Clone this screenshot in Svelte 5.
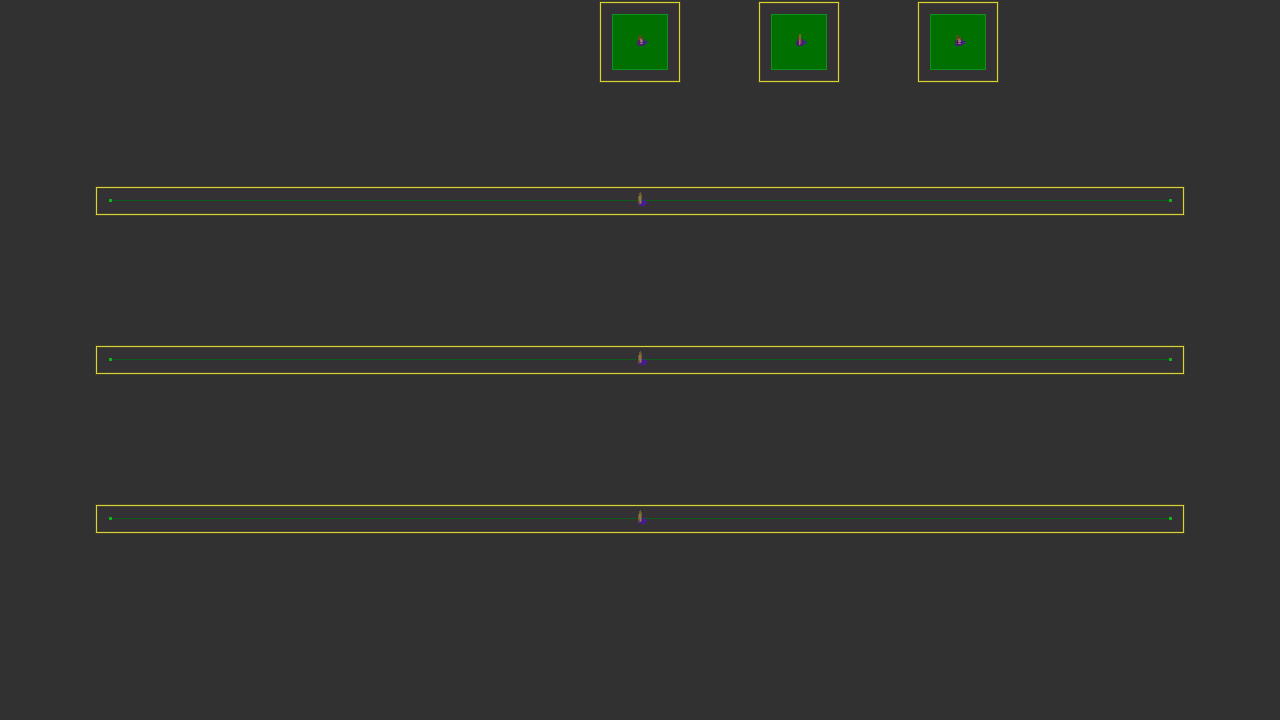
<script>
  const squares = ['ring', 'stem', 'ring'];
  const bars = [1, 2, 3];
</script>

{#snippet marker(kind)}
  <svg class="marker" viewBox="0 0 24 24" aria-hidden="true">
    {#if kind === 'bar'}
      <path d="M11 13h3v-1h2v-1h1v2h2v3h-1v1h-2v1h-5v-1h-1v-3h1z" fill="#4a1a8c" />
      <path d="M14 12h2v1h-2zM17 14h2v1h-2zM14 17h3v1h-3z" fill="#44209a" />
      <path d="M12 4h1v2h1v9h-1v1h-2v-1h-1V8h1V5h1z" fill="#6c5b31" />
      <path d="M11 8h2v5h-2z" fill="#83744c" />
      <path d="M12 12h1v4h-1z" fill="#84727a" />
      <path d="M10 14h1v3h-1z" fill="#54425c" />
    {:else}
      <path d="M8 9h6v1h1v5h-1v1H8v-1H7v-4h1z" fill="#48206c" />
      <path d="M14 10h1v1h3v2h-1v1h-3z" fill="#3d267c" />
      <path d="M16 12h3v1h-3z" fill="#2b495c" />
      {#if kind === 'stem'}
        <path d="M10 4h2v10h-2z" fill="#84602e" />
        <path d="M9 7h1v4H9z" fill="#673c27" />
        <path d="M10 10h1v5h-1z" fill="#927060" />
        <path d="M12 9h1v6h-1z" fill="#572580" />
      {:else}
        <path d="M8 5h1v3h1V5h1v3h1V7h1v3H8z" fill="#744421" />
        <path d="M10 9h2v1h1v2h-1v1h1v1h-3v-1h1v-1h-1z" fill="#8a736c" />
        <path d="M8 10h1v4H8z" fill="#692543" />
        <path d="M13 12h1v3h-1z" fill="#431688" />
      {/if}
    {/if}
  </svg>
{/snippet}

<main>
  <section class="squares">
    {#each squares as kind}
      <div class="frame square">
        <div class="fill">{@render marker(kind)}</div>
      </div>
    {/each}
  </section>
  <section class="bars">
    {#each bars as bar (bar)}
      <div class="frame bar">
        <i class="dot"></i>
        <i class="line"></i>
        {@render marker('bar')}
        <i class="line"></i>
        <i class="dot"></i>
      </div>
    {/each}
  </section>
</main>

<style>
  :global(body) {
    margin: 0;
    background: #313131;
  }
  main {
    min-height: 100vh;
    box-sizing: border-box;
    padding-top: 2px;
    overflow: hidden;
    background: #313131;
  }
  .frame {
    box-sizing: border-box;
    border: 1px solid #d8d03c;
    outline: 1px solid #5a572088;
    box-shadow: inset 0 0 0 1px #5a572077;
    background: #333133;
  }
  .squares {
    display: flex;
    gap: 79px;
    margin-left: calc(50% - 40px);
  }
  .square {
    flex: none;
    width: 80px;
    height: 80px;
    padding: 11px;
  }
  .fill {
    display: grid;
    place-items: center;
    box-sizing: border-box;
    height: 56px;
    padding-left: 4px;
    border: 1px solid #10901a;
    background: #007000;
  }
  .marker {
    display: block;
    flex: none;
    width: 24px;
    height: 24px;
    shape-rendering: crispEdges;
  }
  .bars {
    display: grid;
    gap: 131px;
    margin: 105px 7.5% 0;
  }
  .bar {
    display: flex;
    align-items: center;
    height: 28px;
    padding: 0 11px 1px 12px;
  }
  .line {
    flex: 1;
    height: 1px;
    background: #0e5a18;
  }
  .bar .marker {
    align-self: flex-start;
    margin: 0 -8px 0 -9px;
  }
  .dot {
    flex: none;
    width: 3px;
    height: 3px;
    background: #10b01c;
  }
</style>
